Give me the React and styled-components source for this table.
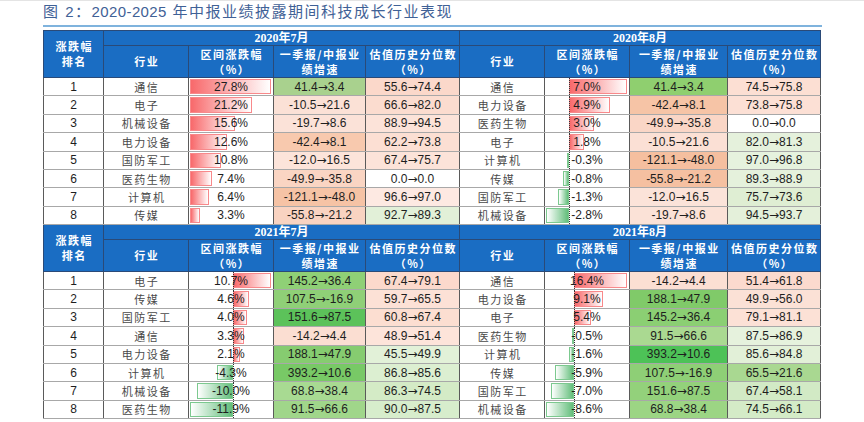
import React from "react";
import styled, { createGlobalStyle } from "styled-components";

const GlobalStyle = createGlobalStyle`
  body {
    margin: 0;
    background: #ffffff;
  }
`;

const Page = styled.div`
  width: 864px;
  height: 422px;
  box-sizing: border-box;
  border-top: 1px solid #e4e4e4;
  padding-left: 43px;
  overflow: hidden;
`;

const Title = styled.div`
  width: 779px;
  height: 22px;
  padding-bottom: 2px;
  border-bottom: 2px solid #7fb3dd;
  font-family: "Liberation Sans", "Noto Sans CJK SC", sans-serif;
  font-size: 15px;
  line-height: 22px;
  letter-spacing: 1.5px;
  color: #3f6196;
  white-space: nowrap;
`;

const Years = styled.span`
  letter-spacing: 0.4px;
`;

const Table = styled.table`
  margin-top: 3px;
  width: 777px;
  table-layout: fixed;
  border-collapse: collapse;
`;

const Row = styled.tr`
  height: ${(p) => p.$h}px;
`;

const HeadCell = styled.th`
  background: #1a6dc3;
  color: #ffffff;
  border: 1px solid #2a4a78;
  padding: 0 0 0 1.5px;
  font-family: "Noto Sans CJK SC", sans-serif;
  font-weight: 700;
  font-size: 11px;
  line-height: 15px;
  letter-spacing: 1.5px;
  text-align: center;
  vertical-align: middle;
  white-space: nowrap;
`;

const MonthCell = styled(HeadCell)`
  padding: 0;
  font-family: "Liberation Serif", "Noto Sans CJK SC", serif;
  font-size: 12px;
  line-height: 13px;
  letter-spacing: 0;
`;

const Cell = styled.td`
  padding: 0;
  border-top: 1px solid #a8a8a8;
  border-bottom: 1px solid #a8a8a8;
  border-left: 1px solid #5a5a5a;
  border-right: 1px solid #5a5a5a;
  background: ${(p) => p.$bg || "#ffffff"};
  color: #1e1e1e;
  font-family: "Liberation Sans", sans-serif;
  font-size: 12px;
  line-height: 14px;
  text-align: center;
  vertical-align: middle;
  white-space: nowrap;
`;

const NameCell = styled(Cell)`
  padding-left: 1.5px;
  font-family: "Noto Sans CJK SC", sans-serif;
  font-size: 11px;
  letter-spacing: 1.5px;
  color: #4a4a4a;
`;

const Arrow = styled.span`
  font-family: "DejaVu Sans", sans-serif;
  font-size: 12px;
`;

const BarCell = styled(Cell)`
  position: relative;
`;

const BarTrack = styled.span`
  position: absolute;
  top: 1px;
  bottom: 1px;
  left: 1px;
  right: 2px;
`;

const Bar = styled.span`
  position: absolute;
  top: 0;
  bottom: 0;
  box-sizing: border-box;
  background: ${(p) =>
    p.$neg
      ? "linear-gradient(to left, #63be7b, #ffffff)"
      : "linear-gradient(to right, #f8696b, #ffffff)"};
  border: 1px solid ${(p) => (p.$neg ? "#7cc98f" : "#f8898b")};
`;

const Axis = styled.span`
  position: absolute;
  top: -1px;
  bottom: -1px;
  width: 0;
  border-left: 1px dotted #333333;
`;

const BarText = styled.span`
  position: relative;
`;

const blocks = [
  {
    months: ["2020年7月", "2020年8月"],
    left: [
      ["通信", 27.8, "41.4→3.4", "#a9d18e", "55.6→74.4", "#fbd8ca"],
      ["电子", 21.2, "-10.5→21.6", "#fbe1d6", "66.6→82.0", "#fbdccf"],
      ["机械设备", 15.6, "-19.7→8.6", "#fbe2d8", "88.9→94.5", "#fce3d9"],
      ["电力设备", 12.6, "-42.4→8.1", "#f8c9ae", "62.2→73.8", "#fcdfd3"],
      ["国防军工", 10.8, "-12.0→16.5", "#fce4da", "67.4→75.7", "#fce3d9"],
      ["医药生物", 7.4, "-49.9→-35.8", "#fad5c3", "0.0→0.0", "#ffffff"],
      ["计算机", 6.4, "-121.1→-48.0", "#f6c3a5", "96.6→97.0", "#fde9e2"],
      ["传媒", 3.3, "-55.8→-21.2", "#f9d3c1", "92.7→89.3", "#e2f0d8"],
    ],
    right: [
      ["通信", 7.0, "41.4→3.4", "#8fcf6f", "74.5→75.8", "#fcdfd3"],
      ["电力设备", 4.9, "-42.4→8.1", "#f6c4a6", "73.8→75.8", "#fce0d5"],
      ["医药生物", 3.0, "-49.9→-35.8", "#fad6c6", "0.0→0.0", "#ffffff"],
      ["电子", 1.8, "-10.5→21.6", "#fbe0d5", "82.0→81.3", "#e5f1dc"],
      ["计算机", -0.3, "-121.1→-48.0", "#f5bf9f", "97.0→96.8", "#e6f2de"],
      ["传媒", -0.8, "-55.8→-21.2", "#f5c0a1", "89.3→88.9", "#e5f1dc"],
      ["国防军工", -1.3, "-12.0→16.5", "#fbe3d9", "75.7→73.6", "#dfeed3"],
      ["机械设备", -2.8, "-19.7→8.6", "#fbe2d7", "94.5→93.7", "#e4f0da"],
    ],
  },
  {
    months: ["2021年7月", "2021年8月"],
    left: [
      ["电子", 10.7, "145.2→36.4", "#8fd076", "67.4→79.1", "#fcd9cc"],
      ["传媒", 4.6, "107.5→-16.9", "#8fd077", "59.7→65.5", "#fce1d6"],
      ["国防军工", 4.0, "151.6→87.5", "#5cc25a", "60.8→67.4", "#fcded1"],
      ["通信", 3.3, "-14.2→4.4", "#fbded2", "48.9→51.4", "#fde4da"],
      ["电力设备", 2.1, "188.1→47.9", "#86cc70", "45.5→49.9", "#e2f1d8"],
      ["计算机", -4.3, "393.2→10.6", "#78c966", "86.8→85.6", "#dcefd1"],
      ["机械设备", -10.0, "68.8→38.4", "#a8da92", "86.3→74.5", "#d4ebc6"],
      ["医药生物", -11.9, "91.5→66.6", "#a0d68a", "90.0→87.5", "#d7edcc"],
    ],
    right: [
      ["通信", 16.4, "-14.2→4.4", "#fbdfd3", "51.4→61.8", "#fbdace"],
      ["电力设备", 9.1, "188.1→47.9", "#80ca69", "49.9→56.0", "#fbe1d6"],
      ["电子", 5.4, "145.2→36.4", "#8bcf73", "79.1→81.1", "#fce1d6"],
      ["医药生物", -0.5, "91.5→66.6", "#aad991", "87.5→86.9", "#e6f2dd"],
      ["计算机", -1.6, "393.2→10.6", "#4dc257", "85.6→84.8", "#e2f0d8"],
      ["传媒", -5.9, "107.5→-16.9", "#8ecf76", "65.5→21.6", "#a9d891"],
      ["国防军工", -7.0, "151.6→87.5", "#93d17b", "67.4→58.1", "#d2eac5"],
      ["机械设备", -8.6, "68.8→38.4", "#9cd584", "74.5→66.1", "#d4ebc7"],
    ],
  },
];

const colWidths = [60, 85, 85, 92, 94, 85, 85, 98, 93];

const scaleOf = (rows) => {
  const vals = rows.map((r) => r[1]);
  const lo = Math.min(0, ...vals);
  const hi = Math.max(0, ...vals);
  const range = hi - lo;
  return { axis: (-lo / range) * 100, range, hasNeg: lo < 0 };
};

const Change = ({ text }) => {
  const [from, to] = text.split("→");
  return (
    <>
      {from}
      <Arrow>→</Arrow>
      {to}
    </>
  );
};

const DataBar = ({ value, scale }) => {
  const w = (Math.abs(value) / scale.range) * 100;
  const left = value < 0 ? scale.axis - w : scale.axis;
  return (
    <BarCell>
      <BarTrack>
        <Bar $neg={value < 0} style={{ left: `${left}%`, width: `${w}%` }} />
        {scale.hasNeg && <Axis style={{ left: `${scale.axis}%` }} />}
      </BarTrack>
      <BarText>{value.toFixed(1)}%</BarText>
    </BarCell>
  );
};

const Half = ({ row, scale }) => (
  <>
    <NameCell>{row[0]}</NameCell>
    <DataBar value={row[1]} scale={scale} />
    <Cell $bg={row[3]}>
      <Change text={row[2]} />
    </Cell>
    <Cell $bg={row[5]}>
      <Change text={row[4]} />
    </Cell>
  </>
);

const SubHeads = () => (
  <>
    <HeadCell>行业</HeadCell>
    <HeadCell>
      区间涨跌幅
      <br />
      （%）
    </HeadCell>
    <HeadCell>
      一季报/中报业
      <br />
      绩增速
    </HeadCell>
    <HeadCell>
      估值历史分位数
      <br />
      （%）
    </HeadCell>
  </>
);

const Block = ({ block }) => {
  const ls = scaleOf(block.left);
  const rs = scaleOf(block.right);
  return (
    <>
      <Row $h={15}>
        <HeadCell rowSpan={2}>
          涨跌幅
          <br />
          排名
        </HeadCell>
        <MonthCell colSpan={4}>{block.months[0]}</MonthCell>
        <MonthCell colSpan={4}>{block.months[1]}</MonthCell>
      </Row>
      <Row $h={32}>
        <SubHeads />
        <SubHeads />
      </Row>
      {block.left.map((row, i) => (
        <Row $h={18.375} key={i}>
          <Cell>{i + 1}</Cell>
          <Half row={row} scale={ls} />
          <Half row={block.right[i]} scale={rs} />
        </Row>
      ))}
    </>
  );
};

const App = () => (
  <Page>
    <GlobalStyle />
    <Title>
      图 2：<Years>2020-2025</Years> 年中报业绩披露期间科技成长行业表现
    </Title>
    <Table>
      <colgroup>
        {colWidths.map((w, i) => (
          <col key={i} style={{ width: w }} />
        ))}
      </colgroup>
      <tbody>
        {blocks.map((b, i) => (
          <Block block={b} key={i} />
        ))}
      </tbody>
    </Table>
  </Page>
);

export default App;
